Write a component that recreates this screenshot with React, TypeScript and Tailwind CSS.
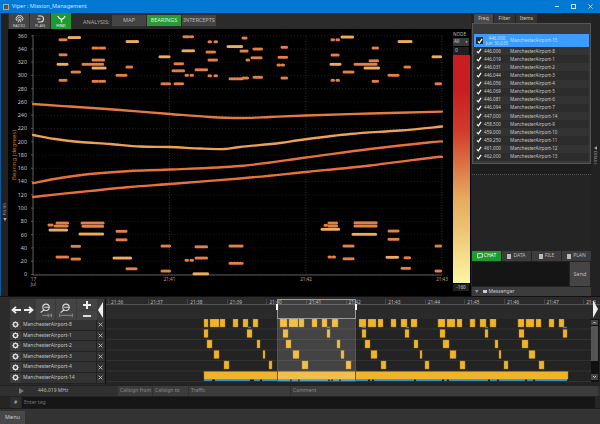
import React from "react";

const ticks = [360,340,320,300,280,260,240,220,200,180,160,140,120,100,80,60,40,20,0];
const yOf = (v: number) => 35.6 + (360 - v) * 0.6635;

// x1, x2, y, light?
const segs: [number, number, number, number?][] = [
  [60,67,39.7],[69,81,37.5,1],[60,67,54.7],[58,67.5,64.3,1],[60,67,80.3],[72,81,72],[83,104,64.3],[93,105,60],[93,106,68,1],
  [93,98,48],[100,105,48],[93,98,81.3],[100,105,81.3],[117,127,75.3],[127,138,41.5,1],[127,132,67],[160,170,56.7,1],[162,170,83.7],
  [175,184,83.7],[175,184,63.7],[173,184,70.7],[184,189,36.7],[191,193,36.7],[183,194,50.7,1],[186,189,75.3],[191,193,75.3],[196,208,69.7],
  [207,212,52],[213,216,52],[209,212,41.7],[215,217,41.7],[209,214,60],[215,217,60],[209,212,75.7],[215,217,75.7],
  [228,243,46.5,1],[230,243,78.7],[243,248,78],[241,248,51],[243,247,38],[254,262,49],[247,249,60],[252,262,57.7],[254,262,77.3],
  [282,287,47.3],[279,287,57.3],[278,281,65],[282,284,65],[282,287,78],
  [332,335,39.7],[337,339,39.7],[342,354,37,1],[399,412,41.5,1],[373,378,48],[332,339,55],[433,442,56.7,1],[370,378,60.7],[331,341,64.3,1],
  [355,377,64.3],[365,379,68,1],[405,410,67],[344,354,72],[389,399,75.3],[332,335,80.3],[337,339,80.3],[373,378,81.3],[436,442,83.7],
  [49,53,225],[57,68,223],[55,68,226],[50,68,230,1],[82,104,223],[83,104,226.3],[80,104,234,1],[72,81,246.3],[57,68,257],[72,81,259],
  [117,127,231.3],[117,127,239.7],[114,132,258,1],[127,132,268.7],[133,137,268.7],[162,170,246],[162,170,271],[186,189,260.3],[191,194,260.3],
  [196,208,246.7],[196,208,258],[194,208,273.7,1],[230,243,246],[230,243,263.3],[325,327,225.3],[329,337,223],[329,337,226],[322,340,229.3,1],
  [355,377,222.7],[355,377,226],[353,377,234.3,1],[344,354,246],[329,332,257],[333,336,257],[344,354,258.7],[389,399,231],[389,399,239.3],
  [387,399,257.3,1],[405,410,257.7],[402,410,268.3],[436,442,246],[436,442,271],
];

const curves: [number[][], string][] = [
  [[[33,104],[70,106.5],[120,110],[170,114],[210,117],[240,118],[270,117],[306,115.5],[370,113.5],[442,111.7]], "#e27a42"],
  [[[33,135],[55,139],[80,142],[110,144],[140,146.5],[170,147],[200,148.5],[225,149],[240,147],[280,143],[300,140],[350,134],[400,130.5],[442,126.5]], "#eda056"],
  [[[33,183],[60,178],[90,174],[130,171],[170,169.5],[240,166],[306,157.5],[370,149],[433,142],[442,141.5]], "#e8703c"],
  [[[33,197],[80,192],[130,187],[170,184],[240,178.5],[306,172],[370,165.5],[433,157.5],[442,157]], "#e8703c"],
];

function smooth(p: number[][]) {
  let d = `M${p[0][0]} ${p[0][1]}`;
  for (let i = 0; i < p.length - 1; i++) {
    const a = p[Math.max(i - 1, 0)], b = p[i], c = p[i + 1], e = p[Math.min(i + 2, p.length - 1)];
    d += `C${b[0] + (c[0] - a[0]) / 6} ${b[1] + (c[1] - a[1]) / 6} ${c[0] - (e[0] - b[0]) / 6} ${c[1] - (e[1] - b[1]) / 6} ${c[0]} ${c[1]}`;
  }
  return d;
}

const rows: [number, number][][] = [
  [[203,207],[209,218],[219,224],[232,237],[242,247],[252,257],[279,286],[288,297],[298,303],[311,316],[321,326],[331,337],[358,365],[367,375],[377,382],[390,395],[400,406],[410,416],[437,444],[446,454],[456,461],[469,474],[479,485],[489,495],[517,523],[525,533],[535,540],[548,553],[558,563]],
  [[203,207],[246,251],[282,287],[326,329],[361,365],[404,408],[439,444],[484,487],[518,523],[562,566]],
  [[206,211],[256,259],[285,290],[336,339],[364,369],[413,417],[442,448],[494,497],[521,527]],
  [[213,218],[262,264],[292,298],[340,343],[370,376],[419,421],[449,455],[498,500],[528,534]],
  [[223,228],[268,271],[301,307],[345,350],[380,385],[424,428],[459,464],[503,507],[538,543]],
];
const rowY = [320, 330.5, 341, 351.5, 362];
const blueTicks = [[247,250],[326,329],[361,365],[405,408],[484,487],[562,566]];
const blackGaps = [211,212,249,251,259,289,297,327,330,338,367,371,413,441,446,487,496,524,532,566];

const list = [
  ["446.006","8"],["446.019","1"],["446.031","2"],["446.044","3"],["446.056","4"],["446.069","5"],["446.081","6"],
  ["446.094","7"],["447.000","14"],["458.500","9"],["459.000","10"],["459.250","11"],["461.000","12"],["462.000","13"],
];
const trackNames = ["8","1","2","3","4","14"];
const rulerLabels = ["21:36","21:37","21:38","21:39","21:40","21:41","21:42","21:43","21:44","21:45","21:46","21:47","21:4"];

function Check({ className = "" }: { className?: string }) {
  return (
    <svg viewBox="0 0 10 10" className={"w-[6px] h-[6px] " + className}>
      <path d="M1.5 5.5 L4 8 L8.5 1.5" fill="none" stroke="#fff" strokeWidth="2" />
    </svg>
  );
}

function Tool({ label, active, children }: { label: string; active?: boolean; children: React.ReactNode }) {
  return (
    <div className={"w-[20px] h-[16px] flex flex-col items-center justify-center " + (active ? "bg-[#1f9a30] text-white" : "bg-[#454545] text-[#ccc]")}>
      {children}
      <span className="text-[4px] leading-[5px]">{label}</span>
    </div>
  );
}

function Gear() {
  return (
    <svg viewBox="0 0 10 10" className="w-[7px] h-[7px]">
      <circle cx="5" cy="5" r="3" fill="none" stroke="#ddd" strokeWidth="2" />
      <path d="M5 0.5V2M5 8V9.5M0.5 5H2M8 5H9.5M1.8 1.8L3 3M7 7L8.2 8.2M8.2 1.8L7 3M3 7L1.8 8.2" stroke="#ddd" strokeWidth="1.2" />
    </svg>
  );
}

const hatch = "bg-[radial-gradient(#4a4a4a_0.5px,transparent_0.6px)] bg-[length:2px_2px]";

export default function App() {
  return (
    <div className="w-[600px] h-[424px] overflow-hidden flex flex-col bg-[#2a2a2a] font-['Noto_Sans',sans-serif] text-[#ccc]">
      {/* title bar */}
      <div className="h-[13px] shrink-0 bg-[#0078d4] flex items-center pl-[3px] text-[#cfe4f7]">
        <div className="w-[6px] h-[6px] bg-[#555] border border-[#aaa] mr-[3px]" />
        <span className="text-[5.5px] leading-none">Viper : Mission_Management</span>
        <div className="ml-auto flex items-center gap-[12px] pr-[7px]">
          <div className="w-[4px] h-[1px] bg-[#cfe4f7]" />
          <div className="w-[5px] h-[5px] border border-[#cfe4f7]" />
          <svg viewBox="0 0 6 6" className="w-[5px] h-[5px]"><path d="M0.5 0.5L5.5 5.5M5.5 0.5L0.5 5.5" stroke="#e8f2fb" strokeWidth="0.9" /></svg>
        </div>
      </div>

      {/* upper row */}
      <div className="h-[283px] shrink-0 flex">
        <div className="w-[8px] shrink-0 bg-[#222] border-l border-[#0b5a9e] flex flex-col items-center justify-center pt-[115px]">
          <span className="text-[3.5px] text-[#999] [writing-mode:vertical-rl] rotate-180">PULSES</span>
          <svg viewBox="0 0 6 5" className="w-[4px] h-[3px] mt-[2px]"><path d="M0 0H6L3 5Z" fill="#aaa" /></svg>
        </div>

        <div className="w-[463px] shrink-0 flex flex-col">
          {/* toolbar */}
          <div className="h-[16px] shrink-0 flex items-start pl-[1px] gap-[1px] bg-[#2b2b2b]">
            <Tool label="RADIO">
              <svg viewBox="0 0 12 10" className="w-[9px] h-[8px]"><path d="M2.5 7.5A4.5 4.5 0 1 1 9.5 7.5M4.2 6A2.2 2.2 0 1 1 7.8 6M4 9.5L6 5.5L8 9.5" fill="none" stroke="#ddd" strokeWidth="1.3" /></svg>
            </Tool>
            <Tool label="PLAN">
              <svg viewBox="0 0 12 10" className="w-[9px] h-[8px]"><path d="M2.5 1H6.5Q10 1 10 5Q10 9 6.5 9H2.5M1 5H6" fill="none" stroke="#ddd" strokeWidth="1.5" /></svg>
            </Tool>
            <Tool label="FIND" active>
              <svg viewBox="0 0 12 10" className="w-[9px] h-[8px]"><path d="M1 1Q3 5 6 5.5Q9 5 11 1M6 5.5V9.5" fill="none" stroke="#fff" strokeWidth="1.6" /></svg>
            </Tool>
            <span className="text-[5.5px] text-[#aaa] ml-[11px] mt-[5px] w-[27px]">ANALYSIS:</span>
            <div className="flex gap-[1px] mt-[2px] ml-[1px] text-[5.5px] text-[#bbb]">
              <div className="w-[34px] h-[11px] bg-[#444] flex items-center justify-center">MAP</div>
              <div className="w-[34px] h-[11px] bg-[#2a9a33] text-[#d5f5d5] flex items-center justify-center">BEARINGS</div>
              <div className="w-[34px] h-[11px] bg-[#444] flex items-center justify-center">INTERCEPTS</div>
            </div>
          </div>

          {/* chart + legend */}
          <div className="flex-1 flex bg-black">
            <svg viewBox="8 29 444 267" className="w-[444px] h-[267px] shrink-0" fontFamily="'Noto Sans',sans-serif">
              {ticks.map((t) => (
                <g key={t}>
                  <line x1="33" x2="442" y1={yOf(t)} y2={yOf(t)} stroke="#3a3a3a" strokeWidth="0.6" strokeDasharray="0.8 2.2" />
                  <line x1="31" x2="33" y1={yOf(t)} y2={yOf(t)} stroke="#777" strokeWidth="0.6" />
                  <text x="27" y={yOf(t) + 1.9} textAnchor="end" fontSize="5.4" fill="#c8c8c8">{t}</text>
                </g>
              ))}
              {[169.5, 306, 442].map((x) => (
                <line key={x} x1={x} x2={x} y1="36" y2="275" stroke="#555" strokeWidth="0.6" strokeDasharray="1 1.6" />
              ))}
              <path d="M33 35V275H442" fill="none" stroke="#777" strokeWidth="0.8" />
              <text x="33.5" y="280.5" textAnchor="middle" fontSize="4.6" fill="#aaa">17</text>
              <text x="33.5" y="286" textAnchor="middle" fontSize="4.6" fill="#aaa">Jul</text>
              <text x="169.5" y="280.5" textAnchor="middle" fontSize="4.6" fill="#aaa">21:41</text>
              <text x="306" y="280.5" textAnchor="middle" fontSize="4.6" fill="#aaa">21:42</text>
              <text x="442" y="280.5" textAnchor="middle" fontSize="4.6" fill="#aaa">21:43</text>
              <text transform="translate(15.5 155) rotate(-90)" textAnchor="middle" fontSize="6" fill="#c27c22">Bearing (degrees)</text>
              {curves.map(([pts, c], i) => (
                <path key={i} d={smooth(pts)} fill="none" stroke={c} strokeWidth="2.3" strokeLinecap="round" />
              ))}
              {segs.map(([a, b, y, l], i) => (
                <line key={i} x1={a} x2={b} y1={y} y2={y} stroke={l ? "#f0ab62" : "#e57f45"} strokeWidth="3" strokeLinecap="round" strokeDasharray="0.01 1.5" />
              ))}
            </svg>
            <div className="w-[19px] shrink-0 flex flex-col items-start pl-[1px]">
              <span className="text-[4.6px] leading-[6px] mt-[2px] text-[#bbb]">NODE</span>
              <div className="w-[16px] h-[8px] mt-[1px] bg-[#3a3a3a] flex items-center justify-between px-[1px] text-[4.8px]">All<span className="text-[3px]">▼</span></div>
              <div className="w-[16px] h-[8px] mt-[1px] bg-[#1f1f1f] flex items-center pl-[2px] text-[4.8px]">0</div>
              <div className="w-[17px] h-[228px] mt-[0px] bg-[linear-gradient(to_bottom,#c81e22_0%,#c81e22_15%,#d03a2a_33%,#dc7a48_50%,#e6a85e_62%,#ecc070_75%,#f4dc8a_88%,#fdf6a4_100%)]" />
              <div className="w-[16px] h-[7px] mt-[1px] bg-[#222] flex items-center justify-center text-[4.6px]">-160</div>
            </div>
          </div>
        </div>

        {/* right panel */}
        <div className="w-[120px] shrink-0 flex flex-col bg-[#232323] pl-[1px]">
          <div className="h-[10px] shrink-0 flex gap-[1px] pl-[2px] items-end text-[5px]">
            <div className="w-[19px] h-[9px] bg-[#4a4a4a] flex items-center justify-center">Freq</div>
            <div className="w-[21px] h-[9px] bg-[#333] flex items-center justify-center">Filter</div>
            <div className="w-[21px] h-[9px] bg-[#333] flex items-center justify-center">Items</div>
          </div>
          <div className={"h-[141px] shrink-0 bg-[#3a3a3a] border border-[#555] px-[1px] pt-[10px] " + hatch}>
            <div className="h-[13px] bg-[#3d9cff] flex items-center text-[4.6px] text-[#bfe0ff]">
              <div className="w-[7px] h-[7px] bg-[#1e2a38] ml-[2px] flex items-center justify-center"><Check /></div>
              <div className="ml-[1px] w-[26px] leading-[5px] text-center">446.000<br />Jun 30.035</div>
              <span>ManchesterAirport-15</span>
            </div>
            {list.map(([f, n], i) => (
              <div key={f} className={"h-[8.13px] flex items-center text-[4.6px] text-[#c8c8c8] " + (i % 2 ? "bg-[#2c2c2c]" : "bg-[#333]")}>
                <Check className="ml-[2px]" />
                <span className="ml-[2px] w-[26px]">{f}</span>
                <span>ManchesterAirport-{n}</span>
              </div>
            ))}
          </div>
          <div className="h-[11px] shrink-0 bg-[#1e1e1e] border-b border-dotted border-[#555]" />
          <div className="flex-1 bg-[#242424]" />
          <div className="h-[10px] shrink-0 flex gap-[1px] text-[5px] text-[#bbb]">
            <div className="w-[29px] bg-[#1f9a30] text-white flex items-center justify-center gap-[1px]">
              <svg viewBox="0 0 10 10" className="w-[6px] h-[6px]"><path d="M1 1H9V7H4L2 9V7H1Z" fill="none" stroke="#fff" strokeWidth="1.2" /></svg>CHAT
            </div>
            {["DATA", "FILE", "PLAN"].map((t) => (
              <div key={t} className="w-[29px] bg-[#3c3c3c] flex items-center justify-center gap-[2px]">
                <div className="w-[4px] h-[5px] bg-[#bbb]" />{t}
              </div>
            ))}
          </div>
          <div className="h-[24px] shrink-0 flex mt-[1px]">
            <div className="w-[97px] bg-[#151515]" />
            <div className="w-[20px] ml-[1px] bg-[#454545] flex items-center justify-center text-[5.5px] text-[#bbb]">Send</div>
          </div>
          <div className="h-[9px] shrink-0 mt-[1px] bg-[#3c3c3c] flex items-center pl-[3px] gap-[2px] text-[5px]">
            <svg viewBox="0 0 6 5" className="w-[3.5px] h-[3px]"><path d="M0 0H6L3 5Z" fill="#999" /></svg>
            <div className="w-[4px] h-[3px] bg-[#ccc] ml-[2px]" />Messenger
          </div>
        </div>

        <div className="flex-1 bg-[#222] flex flex-col items-center pt-[133px]">
          <svg viewBox="0 0 5 6" className="w-[3px] h-[4px]"><path d="M5 0V6L0 3Z" fill="#aaa" /></svg>
          <span className="text-[3.5px] mt-[1px] text-[#999] [writing-mode:vertical-rl]">DETAILS</span>
        </div>
      </div>

      {/* timeline */}
      <div className="h-[89px] shrink-0 flex bg-[#2b2b2b] border-t border-[#111] pl-[10px] pt-[2px]">
        <div className="w-[94px] shrink-0 flex flex-col">
          <div className="h-[21px] flex gap-[1px] bg-[#3a3a3a]">
            <div className="w-[12px] flex items-center justify-center">
              <svg viewBox="0 0 10 8" className="w-[10px] h-[8px]"><path d="M10 4H3M5 0.8L1.5 4L5 7.2" fill="none" stroke="#eee" strokeWidth="1.8" /></svg>
            </div>
            <div className="w-[12px] flex items-center justify-center">
              <svg viewBox="0 0 10 8" className="w-[10px] h-[8px]"><path d="M0 4H7M5 0.8L8.5 4L5 7.2" fill="none" stroke="#eee" strokeWidth="1.8" /></svg>
            </div>
            <div className="w-[19px] bg-[#444] flex items-center justify-center">
              <svg viewBox="0 0 18 18" className="w-[16px] h-[16px]"><circle cx="9" cy="6" r="3.6" fill="none" stroke="#ddd" strokeWidth="1.2" /><path d="M6.5 9L3 12M7 6H13" stroke="#ddd" strokeWidth="1.2" /><path d="M5 15H11M11.5 13V17M15 13V17M13 15H15" stroke="#999" strokeWidth="1" fill="none" /></svg>
            </div>
            <div className="w-[20px] bg-[#444] flex items-center justify-center">
              <svg viewBox="0 0 18 18" className="w-[16px] h-[16px]"><circle cx="9" cy="6" r="3.6" fill="none" stroke="#ddd" strokeWidth="1.2" /><path d="M6.5 9L3 12M7 6H13" stroke="#ddd" strokeWidth="1.2" /><path d="M2 13V17M16 13V17M3 15H15" stroke="#999" strokeWidth="1" fill="none" /></svg>
            </div>
            <div className="w-[20px] flex flex-col">
              <div className="flex-1 bg-[#444] flex items-center justify-center"><div className="w-[8px] h-[8px] bg-[linear-gradient(#eee,#eee),linear-gradient(#eee,#eee)] bg-no-repeat bg-center bg-[length:8px_2px,2px_8px]" /></div>
              <div className="h-[9px] mt-[1px] bg-[#444] flex items-center justify-center"><div className="w-[8px] h-[2px] bg-[#ddd]" /></div>
            </div>
            <div className="w-[6px] flex items-center justify-center">
              <svg viewBox="0 0 6 18" className="w-[6px] h-[18px]"><path d="M5 1V17L0 9Z" fill="#eee" /></svg>
            </div>
          </div>
          {trackNames.map((n) => (
            <div key={n} className="h-[10.6px] flex items-center bg-[#333] border-b border-[#222] text-[5px]">
              <div className="w-[11px] h-full bg-[#3d3d3d] flex items-center justify-center"><Gear /></div>
              <span className="ml-[2px] flex-1 text-[#c8c8c8]">ManchesterAirport-{n}</span>
              <div className="w-[8px] h-full flex items-center justify-center border-l border-[#222]">
                <svg viewBox="0 0 6 6" className="w-[5px] h-[5px]"><path d="M0.8 0.8L5.2 5.2M5.2 0.8L0.8 5.2" stroke="#ccc" strokeWidth="1" /></svg>
              </div>
            </div>
          ))}
        </div>
        <div className="ml-[1px] flex-1 relative flex flex-col border-l border-[#111]">
          <div className="h-[6px] flex text-[4.8px] text-[#bbb] bg-[#2b2b2b] border-b border-[#555] pl-[2px]">
            {rulerLabels.map((l) => (
              <span key={l} className="w-[39.6px] shrink-0 leading-[6px] pl-[2px] border-l border-[#444]">{l}</span>
            ))}
          </div>
          <div className={"h-[14px] shrink-0 bg-[#2a2a2a] " + hatch} />
          <svg viewBox="105 320 495 66" className="w-[495px] h-[66px] shrink-0 bg-[#232323]">
            {[320, 330.5, 341, 351.5, 362, 372.5, 383].map((y) => (
              <line key={y} x1="105" x2="590" y1={y - 0.5} y2={y - 0.5} stroke="#3a3a3a" strokeWidth="0.7" />
            ))}
            {rows.map((r, i) => r.map(([a, b]) => (
              <rect key={i + "-" + a} x={a} y={rowY[i]} width={b - a} height="8" fill="#f0b429" stroke="#a87c20" strokeWidth="0.4" />
            )))}
            {blueTicks.map(([a, b]) => <rect key={a} x={a} y="327.8" width={b - a} height="1.4" fill="#1e88e0" />)}
            <rect x="203" y="372.5" width="364" height="8.3" fill="#f0b429" stroke="#a87c20" strokeWidth="0.4" />
            <rect x="203" y="380.8" width="364" height="1.2" fill="#2a8fd0" />
            {blackGaps.map((x) => <rect key={x} x={x} y="380.6" width="2" height="1.6" fill="#1a1a1a" />)}
            <rect x="590" y="320" width="8" height="63" fill="#111" />
            <rect x="590" y="321" width="7" height="5" fill="#444" />
            <rect x="590" y="327" width="7" height="35" fill="#555" />
            <rect x="590" y="375" width="7" height="6" fill="#444" />
            <path d="M592 324.5L593.5 323L595 324.5M592 377L593.5 378.5L595 377" stroke="#eee" strokeWidth="0.8" fill="none" />
          </svg>
          {/* selection window over the tracks */}
          <div className="absolute left-[171px] top-[0px] w-[79px] h-[20px] border border-[#999] bg-white/10" />
          <div className="absolute left-[171px] top-[20px] w-[79px] h-[63px] bg-white/15 border-x border-[#555]" />
          <div className="absolute left-[170px] top-[5px] w-[2px] h-[6px] bg-white" />
          <div className="absolute left-[249px] top-[5px] w-[2px] h-[6px] bg-white" />
          <svg viewBox="0 0 6 18" className="absolute left-[486px] top-[1px] w-[6px] h-[18px]"><path d="M1 0V18L6 9Z" fill="#eee" /></svg>
        </div>
      </div>

      {/* info bar */}
      <div className="h-[12px] shrink-0 flex items-center pl-[10px] bg-[#303030] gap-[1px] text-[5px] text-[#888] border-y border-[#222]">
        <div className={"w-[22px] h-full flex items-center justify-center " + hatch}>
          <svg viewBox="0 0 6 7" className="w-[5px] h-[6px]"><path d="M0 0V7L6 3.5Z" fill="#777" /></svg>
        </div>
        <span className="ml-[5px] w-[79px] text-[#bbb]">446.019 MHz</span>
        <div className="w-[34px] h-full bg-[#3c3c3c] flex items-center pl-[2px]">Callsign from</div>
        <div className="w-[35px] h-full bg-[#3c3c3c] flex items-center pl-[2px]">Callsign to</div>
        <div className="w-[101px] h-full bg-[#3c3c3c] flex items-center pl-[2px]">Traffic</div>
        <div className="flex-1 h-full bg-[#3c3c3c] flex items-center pl-[2px] mr-[2px]">Comment</div>
      </div>
      {/* tag row */}
      <div className="h-[11px] shrink-0 flex items-center pl-[10px] pr-[5px] bg-[#252525] text-[5px] text-[#777]">
        <div className="w-[11px] h-full bg-[#2e2e2e] flex items-center justify-center text-[#bbb]">#</div>
        <div className="flex-1 h-full ml-[1px] bg-[#161616] flex items-center pl-[2px]">Enter tag</div>
      </div>
      {/* menu */}
      <div className="flex-1 bg-[#333] border-t border-[#1c1c1c] pt-[2px]">
        <div className="w-[25px] h-full bg-[#484848] flex items-center justify-center text-[5.5px] text-[#ccc]">Menu</div>
      </div>
    </div>
  );
}
